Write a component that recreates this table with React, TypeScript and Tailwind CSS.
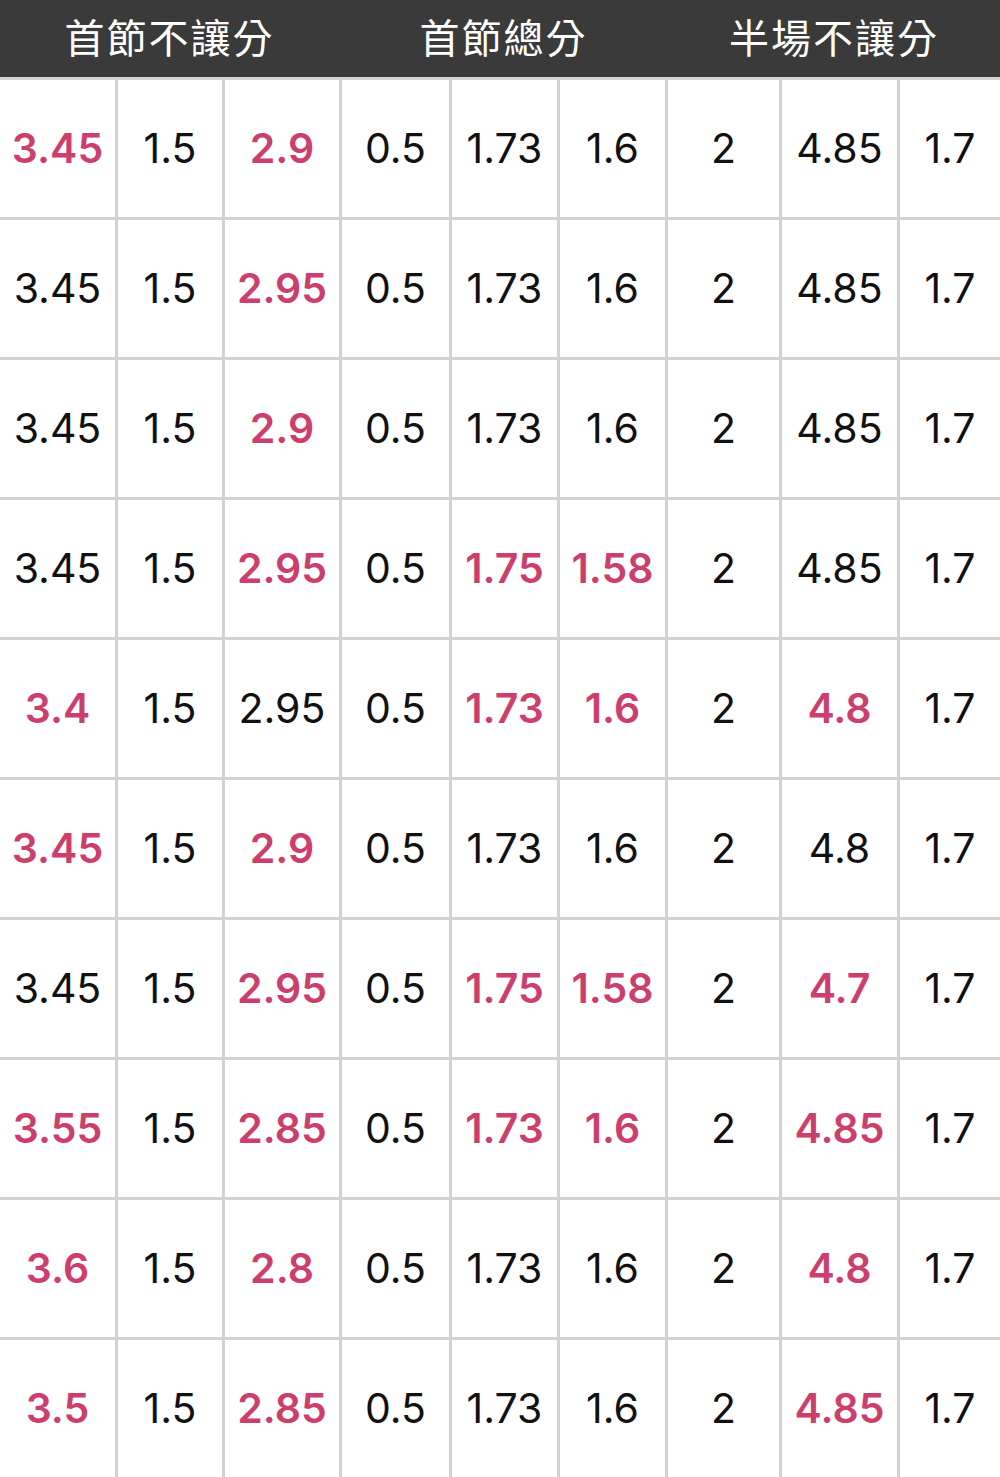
const rows: [string, boolean][][] = [
  [['3.45', true], ['1.5', false], ['2.9', true], ['0.5', false], ['1.73', false], ['1.6', false], ['2', false], ['4.85', false], ['1.7', false]],
  [['3.45', false], ['1.5', false], ['2.95', true], ['0.5', false], ['1.73', false], ['1.6', false], ['2', false], ['4.85', false], ['1.7', false]],
  [['3.45', false], ['1.5', false], ['2.9', true], ['0.5', false], ['1.73', false], ['1.6', false], ['2', false], ['4.85', false], ['1.7', false]],
  [['3.45', false], ['1.5', false], ['2.95', true], ['0.5', false], ['1.75', true], ['1.58', true], ['2', false], ['4.85', false], ['1.7', false]],
  [['3.4', true], ['1.5', false], ['2.95', false], ['0.5', false], ['1.73', true], ['1.6', true], ['2', false], ['4.8', true], ['1.7', false]],
  [['3.45', true], ['1.5', false], ['2.9', true], ['0.5', false], ['1.73', false], ['1.6', false], ['2', false], ['4.8', false], ['1.7', false]],
  [['3.45', false], ['1.5', false], ['2.95', true], ['0.5', false], ['1.75', true], ['1.58', true], ['2', false], ['4.7', true], ['1.7', false]],
  [['3.55', true], ['1.5', false], ['2.85', true], ['0.5', false], ['1.73', true], ['1.6', true], ['2', false], ['4.85', true], ['1.7', false]],
  [['3.6', true], ['1.5', false], ['2.8', true], ['0.5', false], ['1.73', false], ['1.6', false], ['2', false], ['4.8', true], ['1.7', false]],
  [['3.5', true], ['1.5', false], ['2.85', true], ['0.5', false], ['1.73', false], ['1.6', false], ['2', false], ['4.85', true], ['1.7', false]],
];

const cols = 'grid grid-cols-[115px_104px_114px_107px_105px_105px_111px_115px_100px] gap-x-[3px]';

export default function App() {
  return (
    <div className="h-[1477px] w-[1000px] overflow-hidden bg-white font-['Inter','Noto_Sans',sans-serif]">
      <div className={`${cols} h-[77px] bg-[#3a3a3a] pb-[6px] font-['Noto_Sans_CJK_TC',sans-serif] text-[40px] text-white`}>
        <div className="col-span-3 flex items-center justify-center tracking-[2px]">首節不讓分</div>
        <div className="col-span-3 flex items-center justify-center tracking-[2px]">首節總分</div>
        <div className="col-span-3 flex items-center justify-center tracking-[2px]">半場不讓分</div>
      </div>
      <div className={`${cols} gap-y-[3px] bg-[#d2d2d2] pt-[3px]`}>
        {rows.map((row, i) =>
          row.map(([value, hot], j) => (
            <div
              key={`${i}-${j}`}
              className={
                hot
                  ? 'flex h-[137px] items-center justify-center bg-white text-[41px] font-semibold text-[#cc3f6c]'
                  : 'flex h-[137px] items-center justify-center bg-white text-[41px] text-[#111]'
              }
            >
              {value}
            </div>
          ))
        )}
      </div>
    </div>
  );
}
